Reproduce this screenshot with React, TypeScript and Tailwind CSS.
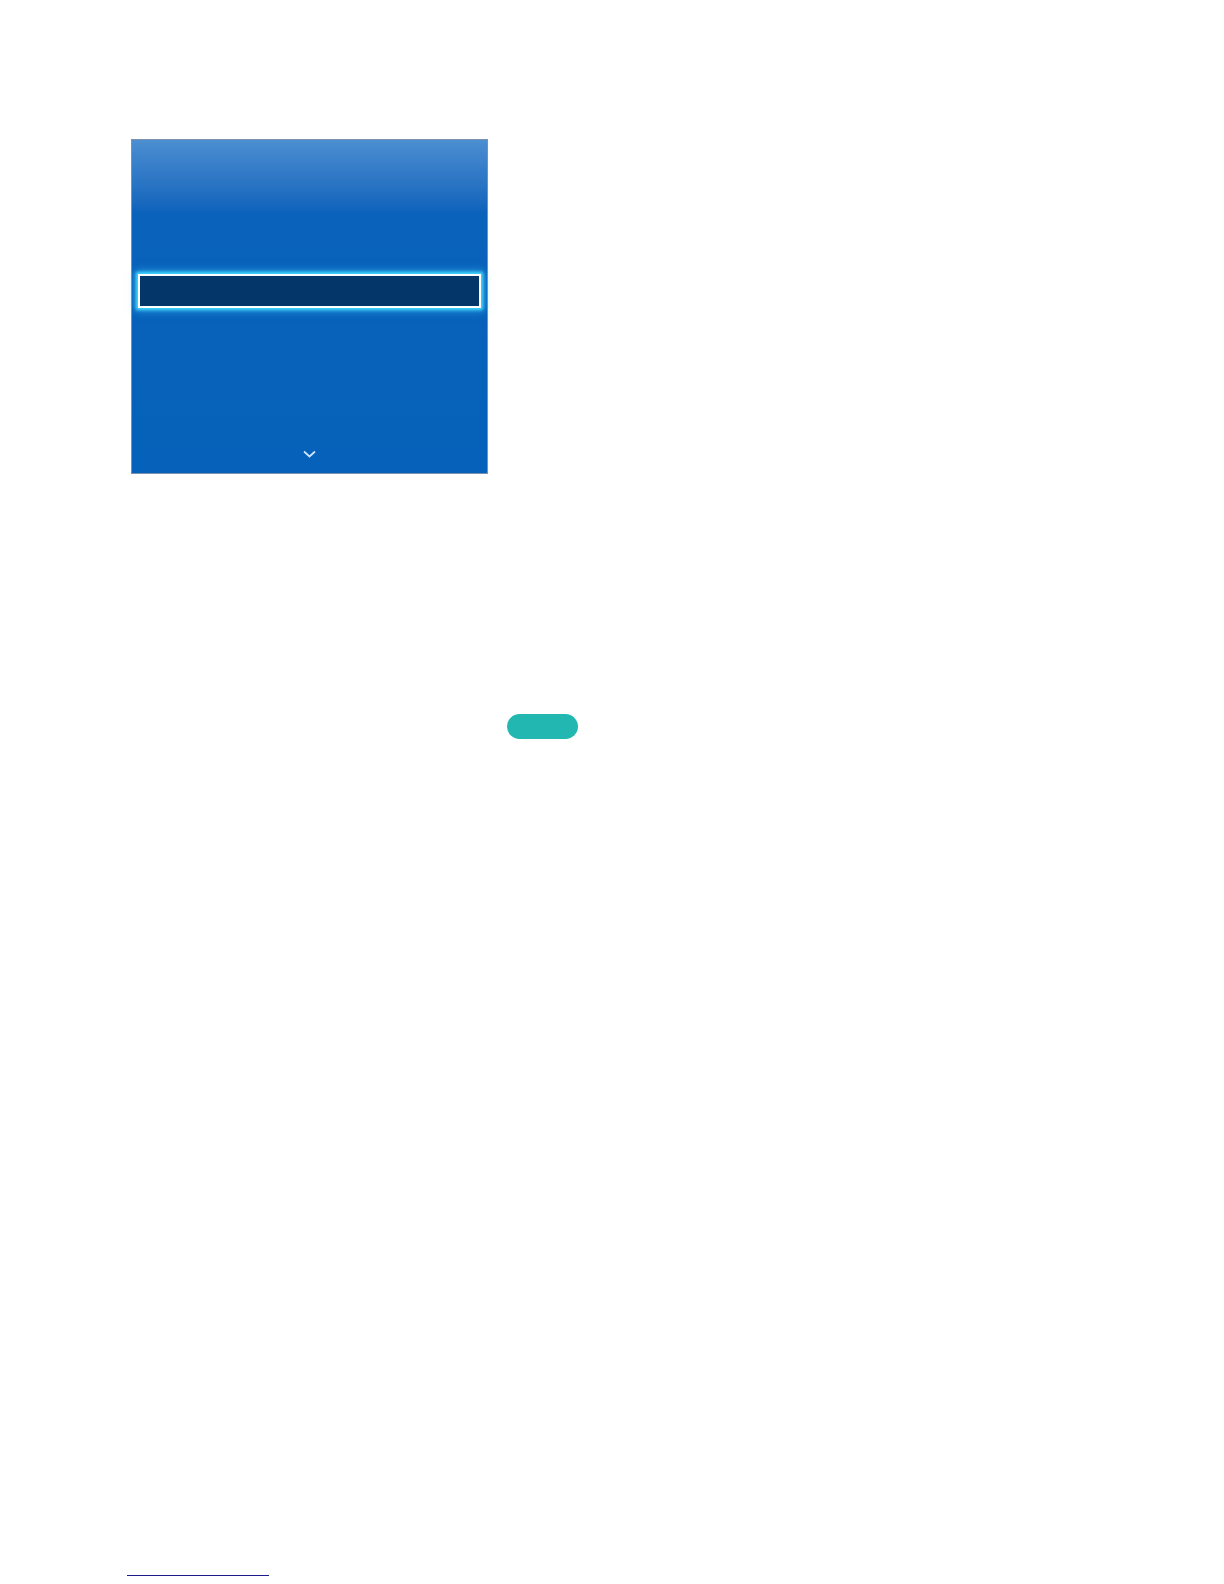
export default function App() {
  return (
    <div className="w-[1224px] h-[1584px] bg-white flex flex-col" style={{ fontFamily: '"Liberation Sans", Arial, sans-serif' }}>
      {/* TV menu panel */}
      <div className="mt-[139px] ml-[131px] w-[357px] h-[335px] border border-[#7d91ab] bg-gradient-to-b from-[#4b8ed1] via-[#0a62bb] via-[22%] to-[#0561b9] flex flex-col">
        <div className="pt-[134px] pl-[6px] pr-[6px]">
          <div className="h-[34px] border-[2.5px] border-white bg-[#05366a] shadow-[0_0_3px_2px_#45d8ff,0_0_8px_3px_rgba(60,200,255,0.55)]" />
        </div>
        <div className="flex-1" />
        <div className="flex justify-center pb-[15px]">
          <svg width="13" height="8" viewBox="0 0 13 8" fill="none">
            <path d="M1 1.5 L6.5 6.5 L12 1.5" stroke="#cfe6ff" strokeWidth="1.7" />
          </svg>
        </div>
      </div>

      {/* teal tag */}
      <div className="mt-[240px] ml-[507px] w-[71px] h-[25px] rounded-full bg-[#22b8b1]" />

      <div className="flex-1" />

      {/* footer link underline */}
      <div className="ml-[127px] mb-[8px] w-[142px] h-[1px] bg-[#1c1c8c]" />
    </div>
  );
}
